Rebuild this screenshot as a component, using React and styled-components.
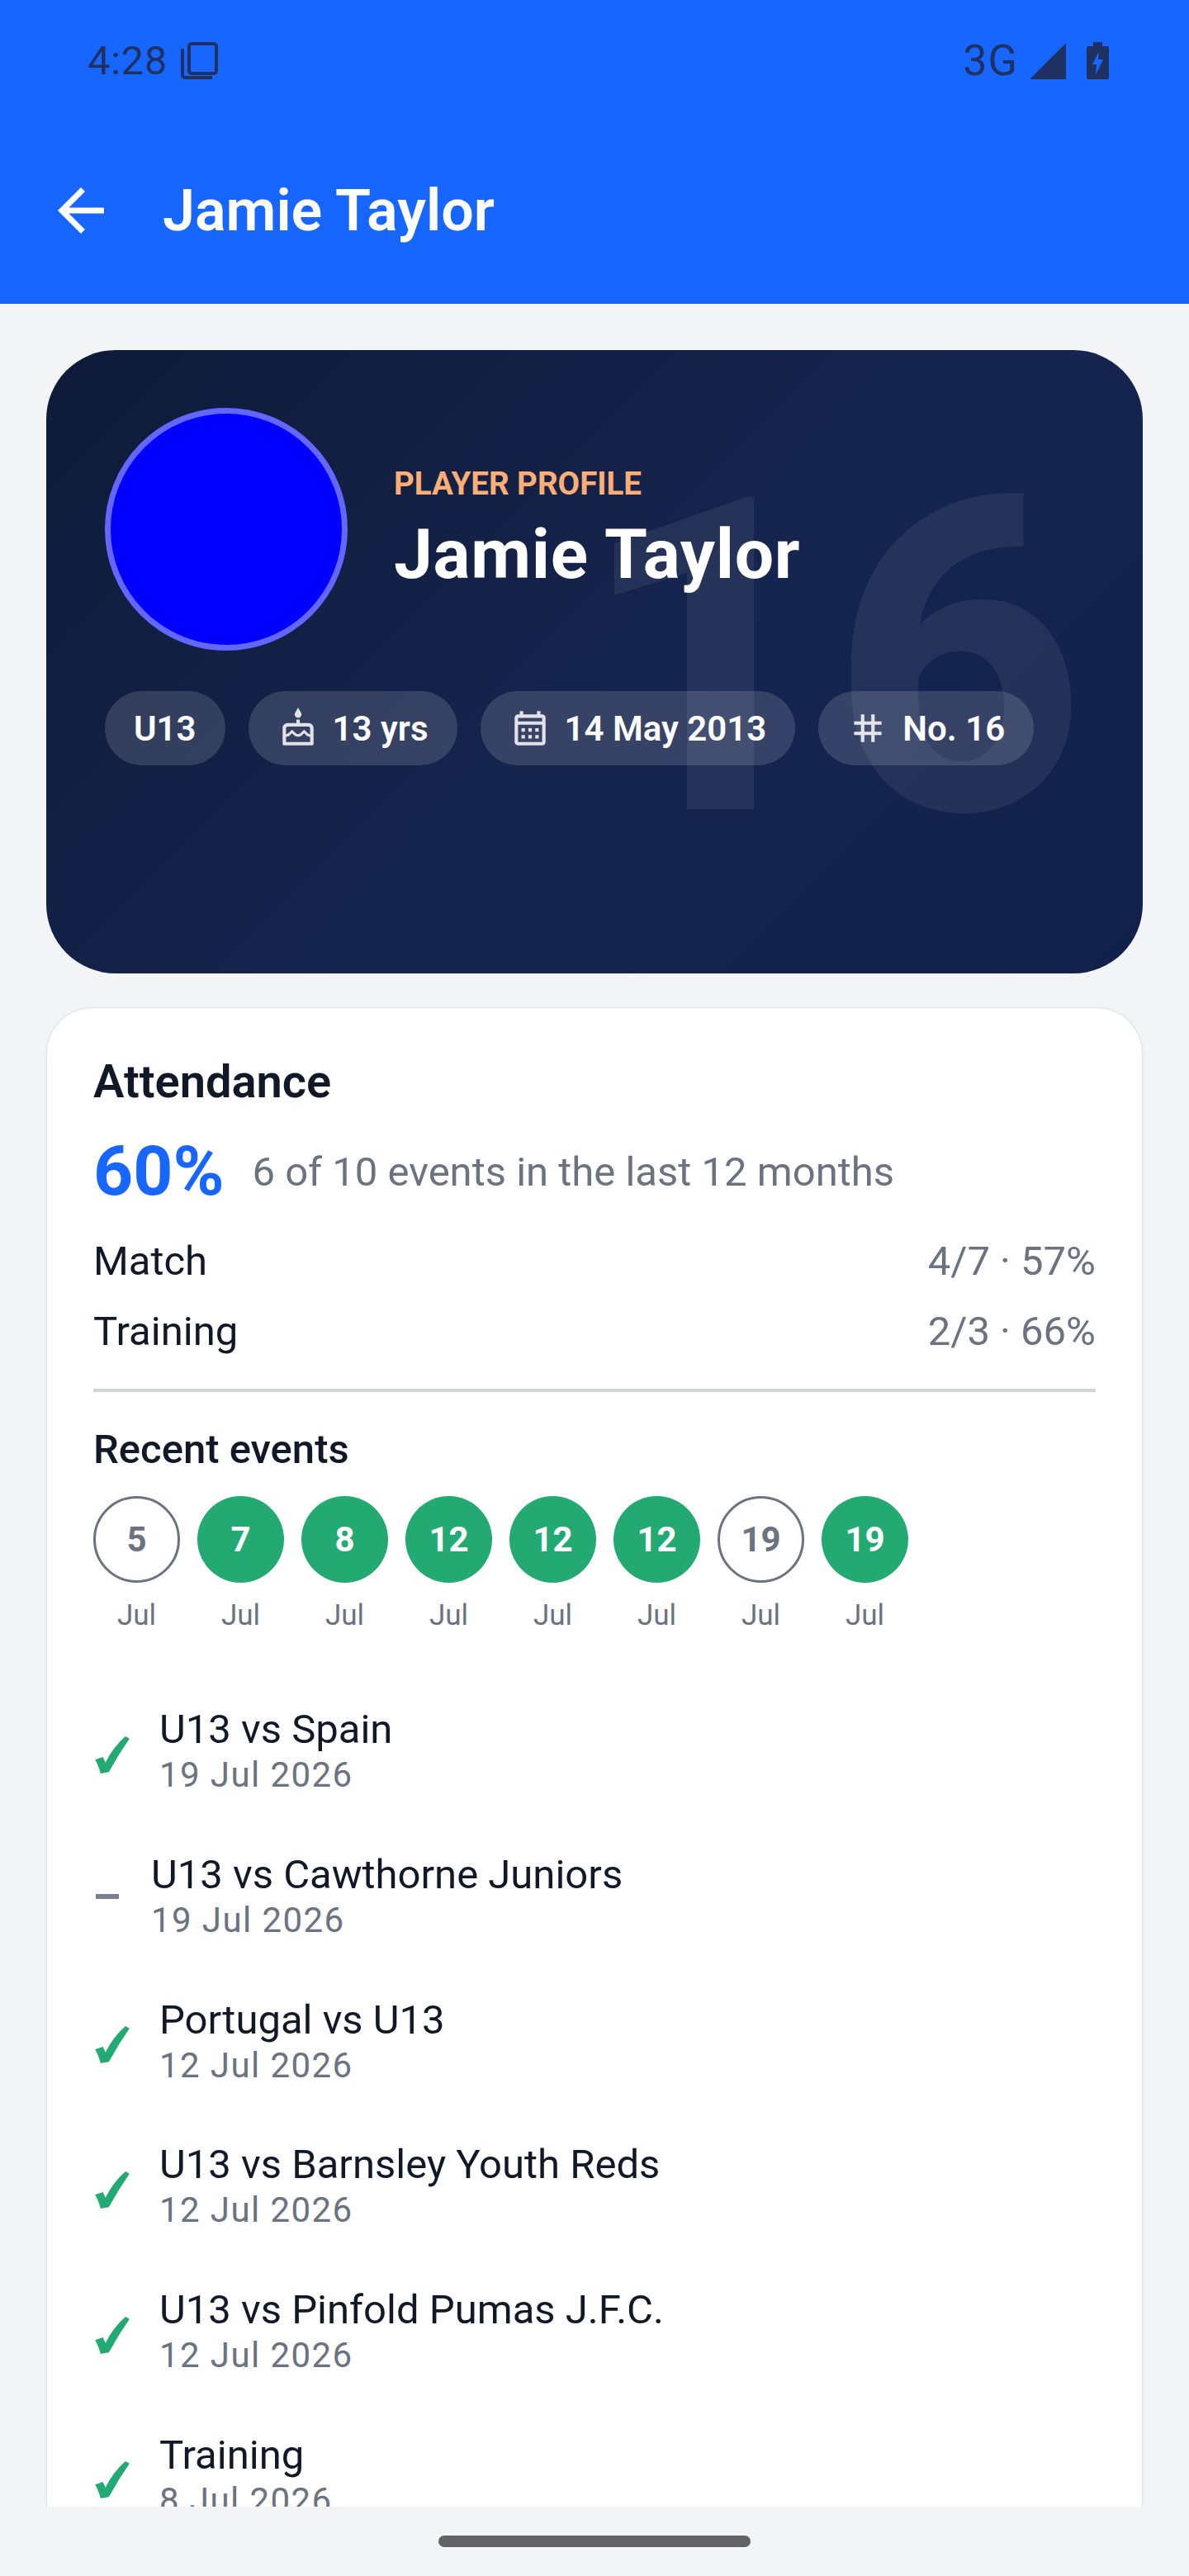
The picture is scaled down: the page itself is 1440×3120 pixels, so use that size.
import React from "react";
import styled, { createGlobalStyle } from "styled-components";
import { MdArrowBack, MdOutlineCake, MdOutlineCalendarMonth, MdTag } from "react-icons/md";

const GlobalStyle = createGlobalStyle`
  html, body {
    margin: 0;
    padding: 0;
    background: #f3f4f6;
  }
  * {
    box-sizing: border-box;
  }
`;

const Page = styled.div`
  width: 1440px;
  height: 3120px;
  display: flex;
  flex-direction: column;
  background: #f3f4f6;
  font-family: Roboto, "Liberation Sans", sans-serif;
  color: #111827;
  overflow: hidden;
`;

const Header = styled.header`
  height: 368px;
  flex: none;
  background: #1666ff;
`;

const StatusBar = styled.div`
  height: 147px;
  padding: 51px 97px 0 106px;
  display: flex;
  justify-content: space-between;
  align-items: flex-start;
  color: #1f3160;
  line-height: 44px;
`;

const StatusGroup = styled.div`
  display: flex;
  align-items: center;
`;

const StatusText = styled.span`
  font-size: ${(p) => p.$size}px;
  letter-spacing: ${(p) => p.$spacing}px;
  margin-right: ${(p) => p.$gap}px;
`;

const StatusIcon = styled.svg`
  display: block;
  flex: none;
  margin-right: ${(p) => p.$gap || 0}px;
`;

const Toolbar = styled.div`
  height: 221px;
  padding: 0 0 5px 56px;
  display: flex;
  align-items: center;
  gap: 57px;
  color: #fff;
  font-size: 70px;
  font-weight: 600;
`;

const BackIcon = styled(MdArrowBack)`
  font-size: 84px;
  flex: none;
`;

const Content = styled.main`
  flex: 1;
  min-height: 0;
  overflow: hidden;
  padding: 56px 56px 0;
  display: flex;
  flex-direction: column;
  gap: 41px;
`;

const Hero = styled.section`
  position: relative;
  flex: none;
  height: 755px;
  padding: 70px 71px;
  border-radius: 84px;
  overflow: hidden;
  color: #fff;
  background: linear-gradient(135deg, #0e1a38 0%, #16254f 55%, #12214b 100%);
`;

const Watermark = styled.div`
  position: absolute;
  right: 70px;
  top: 66px;
  font-size: 532px;
  line-height: 616px;
  font-weight: 800;
  color: rgba(255, 255, 255, 0.07);
`;

const ProfileRow = styled.div`
  position: relative;
  display: flex;
  align-items: center;
  gap: 56px;
`;

const Avatar = styled.div`
  width: 294px;
  height: 294px;
  flex: none;
  border-radius: 50%;
  background: #0000ff;
  border: 7px solid #6366ff;
`;

const Eyebrow = styled.div`
  margin-bottom: 10px;
  font-size: 38.5px;
  line-height: 52px;
  font-weight: 700;
  color: #fdae74;
`;

const HeroName = styled.div`
  font-size: 84px;
  line-height: 100px;
  font-weight: 700;
  letter-spacing: 0.7px;
`;

const ChipRow = styled.div`
  position: relative;
  display: flex;
  gap: 28px;
  margin-top: 49px;
`;

const Chip = styled.div`
  height: 90px;
  padding: 0 35px;
  display: flex;
  align-items: center;
  gap: 17px;
  border-radius: 45px;
  background: rgba(255, 255, 255, 0.14);
  font-size: 42px;
  font-weight: 600;
`;

const ChipIcon = styled.span`
  display: flex;
  font-size: 50px;
  color: rgba(255, 255, 255, 0.85);
`;

const Card = styled.section`
  flex: none;
  padding: 54px 56px 0;
  background: #fff;
  border: 1px solid #dfe2e7;
  border-radius: 56px;
  box-shadow: 0 1px 4px rgba(0, 0, 0, 0.05);
`;

const CardTitle = styled.h2`
  margin: 0;
  font-size: 56px;
  line-height: 70px;
  font-weight: 600;
`;

const Summary = styled.div`
  margin-top: 24px;
  display: flex;
  align-items: center;
  gap: 34px;
`;

const Percent = styled.span`
  font-size: 84px;
  line-height: 100px;
  font-weight: 700;
  color: #1666ff;
`;

const Muted = styled.span`
  font-size: 49px;
  color: #6b7280;
`;

const StatRow = styled.div`
  display: flex;
  justify-content: space-between;
  align-items: center;
  height: 85px;
  font-size: 49px;
`;

const Stats = styled.div`
  margin-top: 16px;
`;

const Divider = styled.hr`
  margin: 27px 0 0;
  border: 0;
  height: 3.5px;
  background: #d1d5db;
`;

const SubTitle = styled.h3`
  margin: 40px 0 0;
  font-size: 49px;
  line-height: 60px;
  font-weight: 500;
`;

const Dots = styled.div`
  margin-top: 26px;
  display: flex;
  gap: 21px;
`;

const DotColumn = styled.div`
  width: 105px;
  display: flex;
  flex-direction: column;
  align-items: center;
  gap: 19px;
`;

const Dot = styled.div`
  width: 105px;
  height: 105px;
  border-radius: 50%;
  display: flex;
  align-items: center;
  justify-content: center;
  font-size: 42px;
  font-weight: 700;
  background: ${(p) => (p.$attended ? "#22aa72" : "#fff")};
  color: ${(p) => (p.$attended ? "#fff" : "#6b7280")};
  border: ${(p) => (p.$attended ? "0" : "3.5px solid #6b7280")};
`;

const DotLabel = styled.div`
  font-size: 35px;
  line-height: 42px;
  color: #6b7280;
`;

const EventList = styled.div`
  margin-top: 56px;
`;

const EventRow = styled.div`
  height: 175.7px;
  display: flex;
  align-items: center;
  gap: ${(p) => (p.$attended ? 36 : 39)}px;
`;

const CheckIcon = styled.svg`
  display: block;
  flex: none;
  width: 42px;
  height: 45px;
  margin: 8px 0 0 2px;
`;

const Dash = styled.div`
  flex: none;
  width: 28px;
  height: 6px;
  margin-left: 3px;
  background: #7a8090;
`;

const EventText = styled.div`
  display: flex;
  flex-direction: column;
`;

const EventTitle = styled.div`
  font-size: 49px;
  line-height: 58px;
`;

const EventDate = styled.div`
  font-size: 42px;
  line-height: 52px;
  letter-spacing: 1.4px;
  color: #6b7280;
`;

const NavBar = styled.div`
  height: 84px;
  flex: none;
  display: flex;
  justify-content: center;
  padding-top: 35px;
`;

const NavHandle = styled.div`
  width: 378px;
  height: 14px;
  border-radius: 7px;
  background: #636366;
`;

const dots = [
  { day: "5", attended: false },
  { day: "7", attended: true },
  { day: "8", attended: true },
  { day: "12", attended: true },
  { day: "12", attended: true },
  { day: "12", attended: true },
  { day: "19", attended: false },
  { day: "19", attended: true },
];

const events = [
  { title: "U13 vs Spain", date: "19 Jul 2026", attended: true },
  { title: "U13 vs Cawthorne Juniors", date: "19 Jul 2026", attended: false },
  { title: "Portugal vs U13", date: "12 Jul 2026", attended: true },
  { title: "U13 vs Barnsley Youth Reds", date: "12 Jul 2026", attended: true },
  { title: "U13 vs Pinfold Pumas J.F.C.", date: "12 Jul 2026", attended: true },
  { title: "Training", date: "8 Jul 2026", attended: true },
];

function Check() {
  return (
    <CheckIcon viewBox="0 0 125 135">
      <path d="M20 135 Q12 105 0 85 L28 75 L38 95 Q65 40 110 0 L125 8 Q85 65 50 130 Z" fill="#22aa72" />
    </CheckIcon>
  );
}

export default function App() {
  return (
    <Page>
      <GlobalStyle />
      <Header>
        <StatusBar>
          <StatusGroup>
            <StatusText $size={49} $gap={16} $spacing={0.6}>4:28</StatusText>
            <StatusIcon width="45" height="45" viewBox="0 0 45 45" fill="none" stroke="currentColor" strokeWidth="4">
              <rect x="10" y="2" width="33" height="36" rx="3" />
              <path d="M2 8v32a3 3 0 0 0 3 3h33" />
            </StatusIcon>
          </StatusGroup>
          <StatusGroup>
            <StatusText $size={52} $gap={14} $spacing={1}>3G</StatusText>
            <StatusIcon $gap={25} width="44" height="44" viewBox="0 0 44 44">
              <path d="M44 0v44H0z" fill="currentColor" />
            </StatusIcon>
            <StatusIcon width="27" height="45" viewBox="0 0 27 45">
              <path
                d="M8 0h11v5h6a2 2 0 0 1 2 2v36a2 2 0 0 1-2 2H2a2 2 0 0 1-2-2V7a2 2 0 0 1 2-2h6z"
                fill="currentColor"
              />
              <path d="M15 11 7 27h5l-1 13 9-19h-6z" fill="#1666ff" />
            </StatusIcon>
          </StatusGroup>
        </StatusBar>
        <Toolbar>
          <BackIcon />
          <span>Jamie Taylor</span>
        </Toolbar>
      </Header>
      <Content>
        <Hero>
          <Watermark>16</Watermark>
          <ProfileRow>
            <Avatar />
            <div>
              <Eyebrow>PLAYER PROFILE</Eyebrow>
              <HeroName>Jamie Taylor</HeroName>
            </div>
          </ProfileRow>
          <ChipRow>
            <Chip>U13</Chip>
            <Chip>
              <ChipIcon>
                <MdOutlineCake />
              </ChipIcon>
              13 yrs
            </Chip>
            <Chip>
              <ChipIcon>
                <MdOutlineCalendarMonth />
              </ChipIcon>
              14 May 2013
            </Chip>
            <Chip>
              <ChipIcon>
                <MdTag />
              </ChipIcon>
              No. 16
            </Chip>
          </ChipRow>
        </Hero>
        <Card>
          <CardTitle>Attendance</CardTitle>
          <Summary>
            <Percent>60%</Percent>
            <Muted>6 of 10 events in the last 12 months</Muted>
          </Summary>
          <Stats>
            <StatRow>
              <span>Match</span>
              <Muted>4/7 · 57%</Muted>
            </StatRow>
            <StatRow>
              <span>Training</span>
              <Muted>2/3 · 66%</Muted>
            </StatRow>
          </Stats>
          <Divider />
          <SubTitle>Recent events</SubTitle>
          <Dots>
            {dots.map((d, i) => (
              <DotColumn key={i}>
                <Dot $attended={d.attended}>{d.day}</Dot>
                <DotLabel>Jul</DotLabel>
              </DotColumn>
            ))}
          </Dots>
          <EventList>
            {events.map((e, i) => (
              <EventRow key={i} $attended={e.attended}>
                {e.attended ? <Check /> : <Dash />}
                <EventText>
                  <EventTitle>{e.title}</EventTitle>
                  <EventDate>{e.date}</EventDate>
                </EventText>
              </EventRow>
            ))}
          </EventList>
        </Card>
      </Content>
      <NavBar>
        <NavHandle />
      </NavBar>
    </Page>
  );
}
